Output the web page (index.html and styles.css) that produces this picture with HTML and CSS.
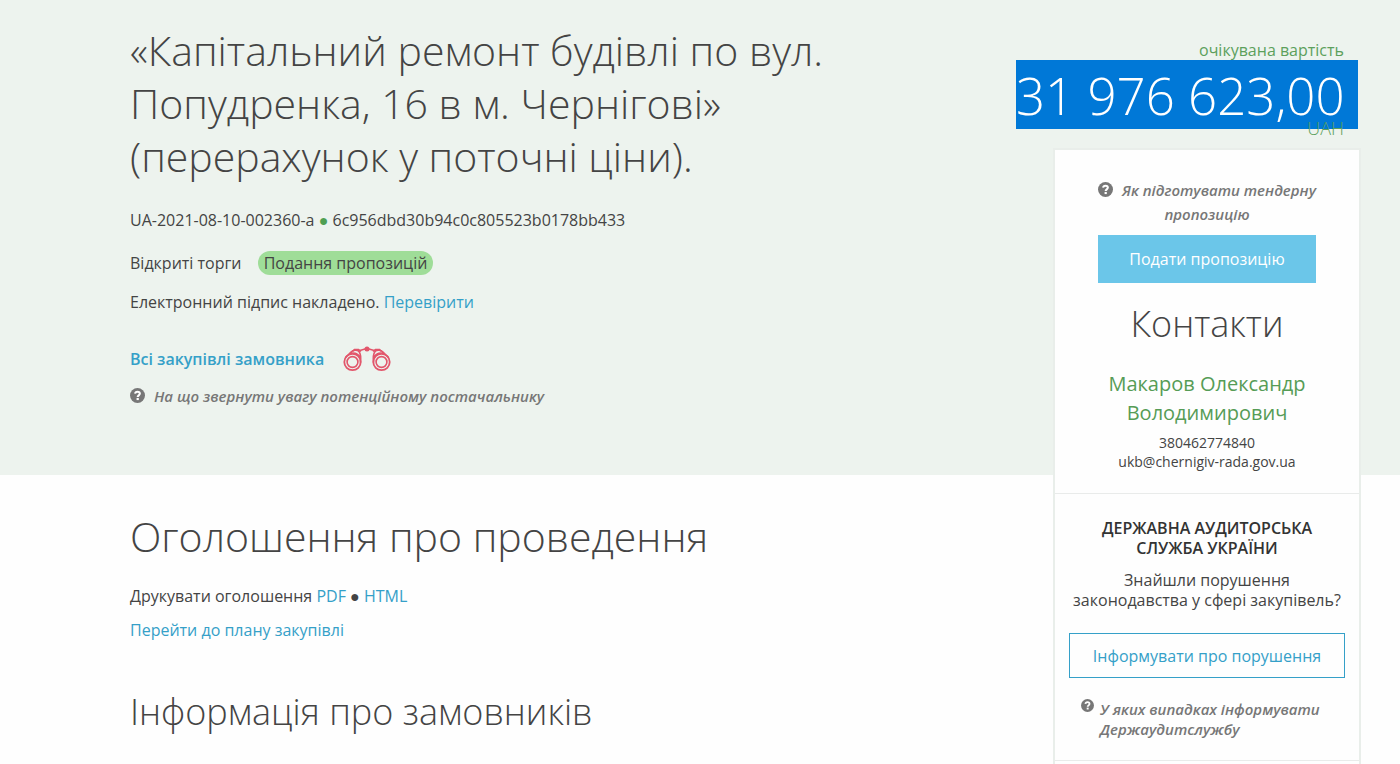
FILE: index.html
```html
<!DOCTYPE html>
<html lang="uk">
<head>
<meta charset="utf-8">
<meta name="viewport" content="width=device-width, initial-scale=1">
<title>Капітальний ремонт будівлі по вул. Попудренка</title>
<link rel="stylesheet" href="styles.css">
</head>
<body>
<svg class="sprite" aria-hidden="true">
  <symbol id="question" viewBox="0 0 16 16">
    <circle cx="8" cy="8" r="8" fill="currentColor"/>
    <path d="M5.400 6.100C5.600 4.500 6.600 3.900 8 3.900c1.500 0 2.500.8 2.500 2 0 1.900-2.300 1.900-2.300 3.600" fill="none" stroke="#fff" stroke-width="2.200"/>
    <rect x="7" y="10.600" width="2.400" height="2.300" fill="#fff"/>
  </symbol>
</svg>
<div class="page">
  <header class="hero">
    <h1 class="title">«Капітальний ремонт будівлі по вул. Попудренка, 16 в м. Чернігові» (перерахунок у поточні ціни).</h1>
    <p class="line ids">UA-2021-08-10-002360-a <span class="dot">●</span> 6c956dbd30b94c0c805523b0178bb433</p>
    <p class="line status">Відкриті торги <span class="badge">Подання пропозицій</span></p>
    <p class="line sign">Електронний підпис накладено. <a href="#">Перевірити</a></p>
    <p class="line all"><a class="strong" href="#">Всі закупівлі замовника</a>
      <svg class="binoculars" viewBox="0 0 48 26" aria-hidden="true" fill="none" stroke="#e2566b">
        <circle cx="9.500" cy="16" r="8.200" stroke-width="1.800"/>
        <circle cx="9.500" cy="16" r="5.400" stroke-width="1.600"/>
        <circle cx="38.500" cy="16" r="8.200" stroke-width="1.800"/>
        <circle cx="38.500" cy="16" r="5.400" stroke-width="1.600"/>
        <path d="M2.500 11.500 8 6c2-2 6-2.500 8-.5 1.500 2 2 6 1.500 11M6 8c4-2 9-1 11 4M45.500 11.500 40 6c-2-2-6-2.500-8-.5-1.500 2-2 6-1.500 11M42 8c-4-2-9-1-11 4" stroke-width="1.600"/>
        <path d="M9.500 5.500l2-2h4L18 5.500M38.500 5.500l-2-2h-4L30 5.500" stroke-width="1.600"/>
        <path d="M15 5 22 3h4l7 2" stroke-width="1.700"/>
        <circle cx="24" cy="3" r="2.500" fill="#e2566b" stroke="none"/>
      </svg>
    </p>
    <p class="hint hero-hint"><svg class="q"><use href="#question"/></svg><em>На що звернути увагу потенційному постачальнику</em></p>
  </header>
  <main class="content">
    <h2 class="heading">Оголошення про проведення</h2>
    <p class="line">Друкувати оголошення <a href="#">PDF</a> ● <a href="#">HTML</a></p>
    <p class="line plan"><a href="#">Перейти до плану закупівлі</a></p>
    <h2 class="subheading">Інформація про замовників</h2>
  </main>
  <aside class="side">
    <div class="price">
      <div class="price-label">очікувана вартість</div>
      <div class="amount">31 976 623,00</div>
      <div class="currency">UAH</div>
    </div>
    <div class="panel">
      <section class="contact">
        <p class="hint guide"><svg class="q"><use href="#question"/></svg><em>Як підготувати тендерну пропозицію</em></p>
        <button class="primary" type="button">Подати пропозицію</button>
        <h2 class="contact-title">Контакти</h2>
        <h3 class="person">Макаров Олександр Володимирович</h3>
        <p class="small">380462774840</p>
        <p class="small">ukb@chernigiv-rada.gov.ua</p>
      </section>
      <section class="audit">
        <h3 class="audit-title">Державна аудиторська служба України</h3>
        <p class="audit-text">Знайшли порушення законодавства у сфері закупівель?</p>
        <button class="outline" type="button">Інформувати про порушення</button>
        <p class="hint audit-hint"><svg class="q"><use href="#question"/></svg><em>У яких випадках інформувати Держаудитслужбу</em></p>
      </section>
    </div>
  </aside>
</div>
</body>
</html>
```
FILE: styles.css
```css
* { box-sizing: border-box; }
body, h1, h2, h3, p { margin: 0; }
body {
  background: #fefefe;
  color: #444;
  font: 16px/24px "Open Sans", "Noto Sans", sans-serif;
}
a { color: #35a0c8; text-decoration: none; }
.sprite { position: absolute; width: 0; height: 0; }

.page {
  display: grid;
  grid-template-columns: minmax(0, 1fr) 384px;
  grid-template-rows: auto 1fr;
  min-height: 100vh;
}
.hero {
  grid-column: 1 / -1;
  grid-row: 1;
  background: #edf3ee;
  padding: 24px 424px 67px 130px;
}
.content { grid-column: 1; grid-row: 2; padding: 31px 0 0 130px; }
.side {
  display: flex;
  flex-direction: column;
  grid-column: 2;
  grid-row: 1 / 3;
  padding: 41px 39px 0 0;
}

.title { max-width: 710px; font-size: 41px; font-weight: 300; line-height: 53px; }
.ids { margin-top: 25px; }
.dot { color: #4f9f52; }
.status { margin-top: 19px; }
.badge {
  display: inline-block;
  margin-left: 12px;
  padding: 0 6px;
  border-radius: 12px;
  background: #9fdd98;
}
.sign { margin-top: 15px; }
.all { display: flex; align-items: center; gap: 19px; margin-top: 32px; }
.strong { font-weight: 600; }
.binoculars { width: 48px; height: 26px; }
.hint { color: #777; font-size: 15px; font-weight: 600; }
.q { width: 15px; height: 15px; margin-right: 9px; vertical-align: -1px; }
.hero-hint { margin-top: 12px; }

.heading { font-size: 41px; font-weight: 300; line-height: 60px; }
.content .line { margin-top: 18px; }
.content .plan { margin-top: 10px; }
.subheading { margin-top: 42px; font-size: 36px; font-weight: 300; line-height: 56px; }

.price { color: #5ca05c; text-align: right; padding-right: 17px; }
.price-label { line-height: 19px; }
.amount {
  width: max-content;
  margin: 0 -13px 0 auto;
  padding: 2px 13px 0 0;
  background: #0078d7;
  color: #fff;
  font-size: 51px;
  font-weight: 300;
  line-height: 67px;
}
.currency { margin-top: -12px; font-size: 18px; font-weight: 300; line-height: 22px; }

.panel {
  flex: 1;
  margin: 9px 0 0 37px;
  border: 2px solid #e9eeea;
  border-bottom: 0;
  background: #fefefe;
  text-align: center;
}
.contact { padding: 28px 43px 22px; border-bottom: 1px solid #e9ebea; }
.guide { margin: 0 -8px; }
.primary, .outline { width: 100%; font: inherit; border: 0; cursor: pointer; }
.primary { height: 48px; margin-top: 9px; background: #6bc6e9; color: #fff; }
.contact-title { margin-top: 15px; font-size: 36px; font-weight: 300; line-height: 52px; }
.person { margin: 19px 0 6px; color: #569c56; font-size: 20px; font-weight: 400; line-height: 29px; }
.small { font-size: 14px; line-height: 19px; }
.audit { padding: 24px 14px 21px; border-bottom: 1px solid #e9ebea; line-height: 20px; }
.audit-title { color: #333; padding: 0 25px; font-size: 16px; font-weight: 600; line-height: 20px; text-transform: uppercase; }
.audit-text { margin: 12px -2px 23px; }
.outline { height: 45px; border: 1px solid #35a0c8; background: transparent; color: #35a0c8; }
.audit-hint { display: flex; gap: 6px; margin: 21px 12px 0; text-align: left; line-height: 20px; }
.audit-hint .q { flex: none; width: 13px; height: 13px; margin: 0; }
```
